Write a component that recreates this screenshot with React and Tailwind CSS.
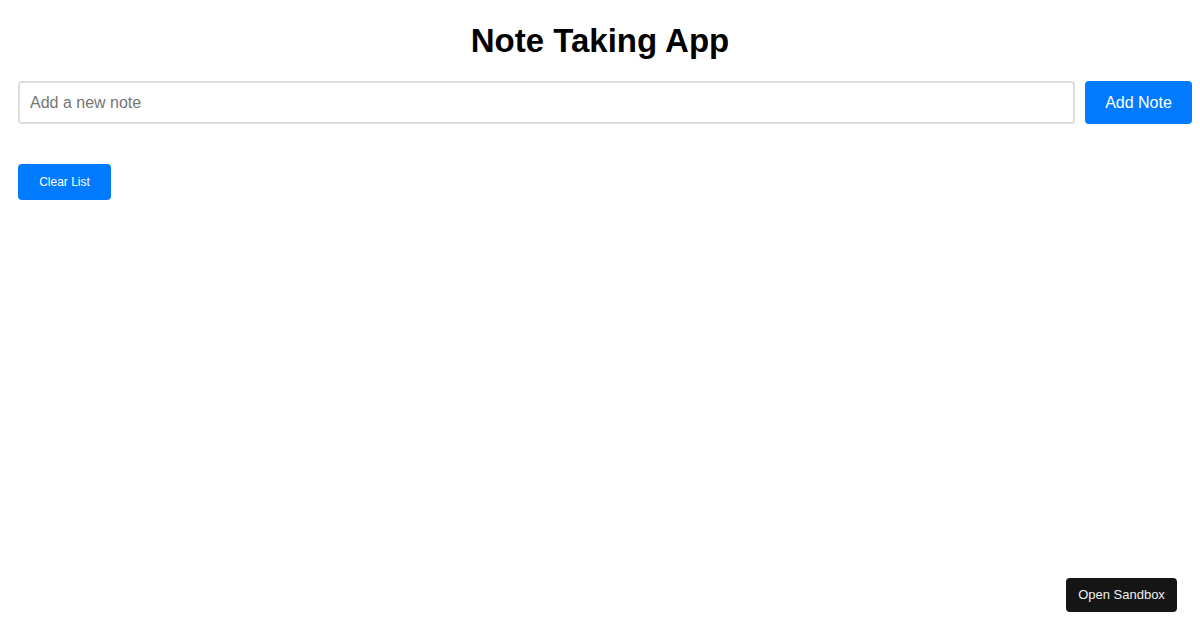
import React, { useState } from 'react';

const App = () => {
  const [text, setText] = useState('');
  const [notes, setNotes] = useState([]);

  const addNote = () => {
    if (!text.trim()) return;
    setNotes([...notes, text.trim()]);
    setText('');
  };

  return (
    <div className="relative min-h-[630px] bg-white font-['Liberation_Sans',Arial,sans-serif] text-black">
      <h1 className="pt-[22px] text-center text-[33px] font-bold leading-[37px]">Note Taking App</h1>

      <div className="pl-[18px] pr-[8px]">
        <div className="mt-[22px] flex gap-[10px]">
          <input
            type="text"
            value={text}
            onChange={(e) => setText(e.target.value)}
            placeholder="Add a new note"
            className="h-[43px] flex-1 rounded-[4px] border-2 border-[#dddddd] px-[10px] text-[16px] outline-none placeholder:text-[#757575]"
          />
          <button
            onClick={addNote}
            className="h-[43px] w-[107px] rounded-[4px] bg-[#007bff] text-[16px] text-white"
          >
            Add Note
          </button>
        </div>

        <ul className="mt-[40px]">
          {notes.map((n, i) => (
            <li key={i} className="text-[16px]">{n}</li>
          ))}
        </ul>

        <button
          onClick={() => setNotes([])}
          className="h-[36px] w-[93px] rounded-[4px] bg-[#007bff] text-[12px] text-white"
        >
          Clear List
        </button>
      </div>

      <button className="absolute bottom-[18px] right-[23px] h-[34px] w-[111px] rounded-[4px] bg-[#151515] text-[13px] text-[#f0f0f0]">
        Open Sandbox
      </button>
    </div>
  );
};

export default App;
